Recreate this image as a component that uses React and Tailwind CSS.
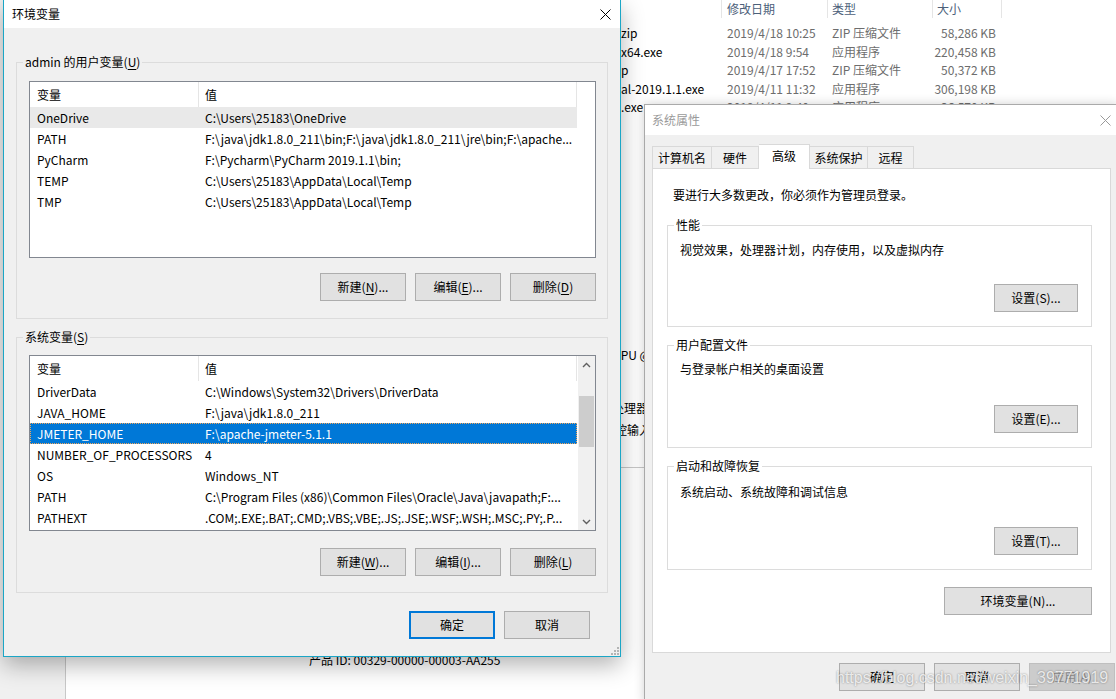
import React from 'react';

const userVars = [
    ['OneDrive', 'C:\\Users\\25183\\OneDrive'],
    ['PATH', 'F:\\java\\jdk1.8.0_211\\bin;F:\\java\\jdk1.8.0_211\\jre\\bin;F:\\apache...'],
    ['PyCharm', 'F:\\Pycharm\\PyCharm 2019.1.1\\bin;'],
    ['TEMP', 'C:\\Users\\25183\\AppData\\Local\\Temp'],
    ['TMP', 'C:\\Users\\25183\\AppData\\Local\\Temp'],
];

const sysVars = [
    ['DriverData', 'C:\\Windows\\System32\\Drivers\\DriverData'],
    ['JAVA_HOME', 'F:\\java\\jdk1.8.0_211'],
    ['JMETER_HOME', 'F:\\apache-jmeter-5.1.1'],
    ['NUMBER_OF_PROCESSORS', '4'],
    ['OS', 'Windows_NT'],
    ['PATH', 'C:\\Program Files (x86)\\Common Files\\Oracle\\Java\\javapath;F:...'],
    ['PATHEXT', '.COM;.EXE;.BAT;.CMD;.VBS;.VBE;.JS;.JSE;.WSF;.WSH;.MSC;.PY;.P...'],
];

const files = [
    ['zip', '2019/4/18 10:25', 'ZIP 压缩文件', '58,286 KB'],
    ['x64.exe', '2019/4/18 9:54', '应用程序', '220,458 KB'],
    ['p', '2019/4/17 17:52', 'ZIP 压缩文件', '50,372 KB'],
    ['al-2019.1.1.exe', '2019/4/11 11:32', '应用程序', '306,198 KB'],
    ['.exe', '2019/4/11 9:40', '应用程序', '36,570 KB'],
];

function CloseX({ color }) {
    return (
        <svg width="11" height="11" viewBox="0 0 11 11">
            <path d="M0.5 0.5L10.5 10.5M10.5 0.5L0.5 10.5" stroke={color} strokeWidth="1" />
        </svg>
    );
}

function Btn({ children, className = '' }) {
    return (
        <div className={`h-[28px] flex items-center justify-center border leading-[16px] whitespace-nowrap ${className}`}>
            {children}
        </div>
    );
}

function U({ children }) {
    return <span className="underline underline-offset-[2px]">{children}</span>;
}

function Scrollbar() {
    return (
        <div className="w-[17px] bg-[#f0f0f0] flex flex-col">
            <div className="h-[17px] flex items-center justify-center">
                <svg width="9" height="6" viewBox="0 0 9 6"><path d="M1 5L4.5 1.5L8 5" stroke="#606060" strokeWidth="1.4" fill="none" /></svg>
            </div>
            <div className="flex-1">
                <div className="mt-[23px] h-[51px] mx-[1px] bg-[#cdcdcd]" />
            </div>
            <div className="h-[17px] flex items-center justify-center">
                <svg width="9" height="6" viewBox="0 0 9 6"><path d="M1 1L4.5 4.5L8 1" stroke="#606060" strokeWidth="1.4" fill="none" /></svg>
            </div>
        </div>
    );
}

function VarList({ rows, heightClass, selected = -1, hover = -1, scroll = false }) {
    return (
        <div className={`flex border border-[#828790] bg-white ${heightClass}`}>
            <div className="flex-1">
                <div className="w-[547px]">
                    <div className="flex h-[25px]">
                        <div className="w-[169px] pl-[7px] flex items-center border-r border-[#e5e5e5]">变量</div>
                        <div className="w-[378px] pl-[6px] flex items-center border-r border-[#e5e5e5]">值</div>
                    </div>
                    {rows.map(([k, v], i) => (
                        <div
                            key={k + i}
                            className={`flex h-[21px] items-center whitespace-nowrap ${
                                i === selected
                                    ? 'bg-[#0078d7] text-white outline-1 outline-dotted outline-[#f2a65a] -outline-offset-1'
                                    : i === hover
                                    ? 'bg-[#e9e9e9]'
                                    : ''
                            }`}
                        >
                            <div className="w-[169px] pl-[7px] overflow-hidden">{k}</div>
                            <div className="w-[378px] pl-[6px] overflow-hidden">{v}</div>
                        </div>
                    ))}
                </div>
            </div>
            {scroll && <Scrollbar />}
        </div>
    );
}

export default function App() {
    return (
        <div className="relative w-[1116px] h-[699px] overflow-hidden bg-[#f0f0f0] text-[12px] text-black font-['Noto_Sans_CJK_SC',sans-serif]">
            {/* explorer window behind */}
            <div className="absolute left-[420px] top-0 w-[696px] h-[124px] bg-white">
                <div className="flex h-[18px] text-[#4c607a]">
                    <div className="w-[302px] border-r border-[#e5e5e5]" />
                    <div className="w-[106px] pl-[5px] flex items-center border-r border-[#e5e5e5]">修改日期</div>
                    <div className="w-[105px] pl-[4px] flex items-center border-r border-[#e5e5e5]">类型</div>
                    <div className="w-[69px] pl-[4px] flex items-center border-r border-[#e5e5e5]">大小</div>
                </div>
                <div className="mt-[6px] flex flex-col">
                    {files.map(([n, d, t, s]) => (
                        <div key={n} className="flex h-[18.5px] items-center whitespace-nowrap">
                            <div className="w-[302px] pl-[201px]">{n}</div>
                            <div className="w-[106px] pl-[5px] text-[#6d6d6d]">{d}</div>
                            <div className="w-[105px] pl-[4px] text-[#6d6d6d]">{t}</div>
                            <div className="w-[69px] pr-[6px] text-right text-[#6d6d6d]">{s}</div>
                        </div>
                    ))}
                </div>
            </div>

            {/* system info window behind */}
            <div className="absolute left-[65px] top-[124px] w-[579px] h-[575px] bg-white border-l border-[#c8c8c8]">
                <div className="pt-[223px] flex flex-col leading-[16px] whitespace-nowrap">
                    <div className="pl-[547px]">CPU @ 2.50GHz</div>
                    <div className="pl-[546px] mt-[37px]">处理器</div>
                    <div className="pl-[537px] mt-[6px]">触控输入</div>
                    <div className="ml-[495px] mt-[29px] h-px bg-[#c8c8c8]" />
                    <div className="pl-[243px] mt-[184px]">产品 ID: 00329-00000-00003-AA255</div>
                </div>
            </div>

            {/* system properties dialog */}
            <div className="absolute left-[644px] top-[104px] w-[474px] h-[600px] bg-[#f0f0f0] border border-[#aaaaaa] shadow-[0_0_10px_rgba(0,0,0,0.18)]">
                <div className="h-[30px] bg-white flex items-center justify-between pl-[7px] pr-[6px]">
                    <span className="text-[#9a9a9a]">系统属性</span>
                    <CloseX color="#9a9a9a" />
                </div>
                <div className="mt-[9px] ml-[7px] h-[24px] flex items-end relative z-10">
                    <div className="w-[60px] h-[22px] flex items-center justify-center border-t border-l border-r border-[#d9d9d9]">计算机名</div>
                    <div className="w-[47px] h-[22px] flex items-center justify-center border-t border-r border-[#d9d9d9]">硬件</div>
                    <div className="w-[51px] h-[25px] -mb-px pb-[3px] flex items-center justify-center bg-white border-t border-r border-[#d9d9d9]">高级</div>
                    <div className="w-[58px] h-[22px] flex items-center justify-center border-t border-r border-[#d9d9d9]">系统保护</div>
                    <div className="w-[46px] h-[22px] flex items-center justify-center border-t border-r border-[#d9d9d9]">远程</div>
                </div>
                <div className="ml-[7px] w-[459px] h-[485px] bg-white border border-[#d9d9d9] flex flex-col">
                    <div className="pt-[18px] pl-[20px] leading-[16px]">要进行大多数更改，你必须作为管理员登录。</div>

                    <fieldset className="ml-[14px] w-[425px] mt-[14px] border border-[#dcdcdc]">
                        <legend className="ml-[6px] px-[2px] leading-[16px]">性能</legend>
                        <div className="pl-[12px] pt-[9px] leading-[16px]">视觉效果，处理器计划，内存使用，以及虚拟内存</div>
                        <div className="flex justify-end pr-[13px] mt-[26px] pb-[14px]">
                            <Btn className="w-[84px] bg-[#e1e1e1] border-[#adadad]">设置(S)...</Btn>
                        </div>
                    </fieldset>

                    <fieldset className="ml-[14px] w-[425px] mt-[10px] border border-[#dcdcdc]">
                        <legend className="ml-[6px] px-[2px] leading-[16px]">用户配置文件</legend>
                        <div className="pl-[12px] pt-[8px] leading-[16px]">与登录帐户相关的桌面设置</div>
                        <div className="flex justify-end pr-[13px] mt-[28px] pb-[14px]">
                            <Btn className="w-[84px] bg-[#e1e1e1] border-[#adadad]">设置(E)...</Btn>
                        </div>
                    </fieldset>

                    <fieldset className="ml-[14px] w-[425px] mt-[10px] border border-[#dcdcdc]">
                        <legend className="ml-[6px] px-[2px] leading-[16px]">启动和故障恢复</legend>
                        <div className="pl-[12px] pt-[10px] leading-[16px]">系统启动、系统故障和调试信息</div>
                        <div className="flex justify-end pr-[13px] mt-[27px] pb-[14px]">
                            <Btn className="w-[84px] bg-[#e1e1e1] border-[#adadad]">设置(T)...</Btn>
                        </div>
                    </fieldset>

                    <div className="ml-[14px] w-[425px] mt-[17px] flex justify-end">
                        <Btn className="w-[148px] bg-[#e1e1e1] border-[#adadad]">环境变量(N)...</Btn>
                    </div>
                </div>
                <div className="mt-[10px] pl-[194px] flex gap-[9px]">
                    <Btn className="w-[86px] bg-[#e1e1e1] border-[#adadad]">确定</Btn>
                    <Btn className="w-[86px] bg-[#e1e1e1] border-[#adadad]">取消</Btn>
                    <Btn className="w-[86px] bg-[#cccccc] border-[#bfbfbf] text-[#8a8a8a]">应用(A)</Btn>
                </div>
            </div>

            {/* environment variables dialog */}
            <div className="absolute left-[3px] top-0 w-[618px] h-[657px] bg-[#f0f0f0] border-x border-b border-[#1ba6c6] shadow-[0_8px_22px_rgba(0,0,0,0.3)] flex flex-col">
                <div className="h-[28px] bg-white flex items-center justify-between pl-[8px] pr-[9px]">
                    <span>环境变量</span>
                    <CloseX color="#000000" />
                </div>
                <div className="px-[12px] flex flex-col">
                    <fieldset className="mt-[26px] border border-[#dcdcdc]">
                        <legend className="ml-[6px] px-[2px] leading-[16px]">admin 的用户变量(<U>U</U>)</legend>
                        <div className="pl-[12px] pr-[11px] pt-[11px] pb-[17px]">
                            <VarList rows={userVars} heightClass="h-[177px]" hover={0} />
                            <div className="mt-[15px] flex justify-end gap-[9px]">
                                <Btn className="w-[86px] bg-[#e1e1e1] border-[#adadad]">新建(<U>N</U>)...</Btn>
                                <Btn className="w-[86px] bg-[#e1e1e1] border-[#adadad]">编辑(<U>E</U>)...</Btn>
                                <Btn className="w-[86px] bg-[#e1e1e1] border-[#adadad]">删除(<U>D</U>)</Btn>
                            </div>
                        </div>
                    </fieldset>

                    <fieldset className="mt-[10px] border border-[#dcdcdc]">
                        <legend className="ml-[6px] px-[2px] leading-[16px]">系统变量(<U>S</U>)</legend>
                        <div className="pl-[12px] pr-[11px] pt-[10px] pb-[16px]">
                            <VarList rows={sysVars} heightClass="h-[176px]" selected={2} scroll />
                            <div className="mt-[17px] flex justify-end gap-[9px]">
                                <Btn className="w-[86px] bg-[#e1e1e1] border-[#adadad]">新建(<U>W</U>)...</Btn>
                                <Btn className="w-[86px] bg-[#e1e1e1] border-[#adadad]">编辑(<U>I</U>)...</Btn>
                                <Btn className="w-[86px] bg-[#e1e1e1] border-[#adadad]">删除(<U>L</U>)</Btn>
                            </div>
                        </div>
                    </fieldset>

                    <div className="mt-[18px] pr-[18px] flex justify-end gap-[9px]">
                        <Btn className="w-[86px] bg-[#e1e1e1] border-2 border-[#0078d7]">确定</Btn>
                        <Btn className="w-[86px] bg-[#e1e1e1] border-[#adadad]">取消</Btn>
                    </div>
                </div>
                <div className="flex-1 flex items-end justify-end pr-[1px] pb-[1px]">
                    <svg width="8" height="8" viewBox="0 0 8 8" fill="#b4b4b4">
                        <rect x="6" y="0" width="2" height="2" />
                        <rect x="3" y="3" width="2" height="2" />
                        <rect x="6" y="3" width="2" height="2" />
                        <rect x="0" y="6" width="2" height="2" />
                        <rect x="3" y="6" width="2" height="2" />
                        <rect x="6" y="6" width="2" height="2" />
                    </svg>
                </div>
            </div>

            {/* watermark */}
            <div className="absolute left-[836px] top-[668px] text-[16px] leading-[20px] font-['Liberation_Sans',sans-serif] text-[rgba(255,255,255,0.8)] [text-shadow:0_0_2px_rgba(0,0,0,0.45)] whitespace-nowrap">
                https://blog.csdn.net/weixin_39771919
            </div>
        </div>
    );
}
